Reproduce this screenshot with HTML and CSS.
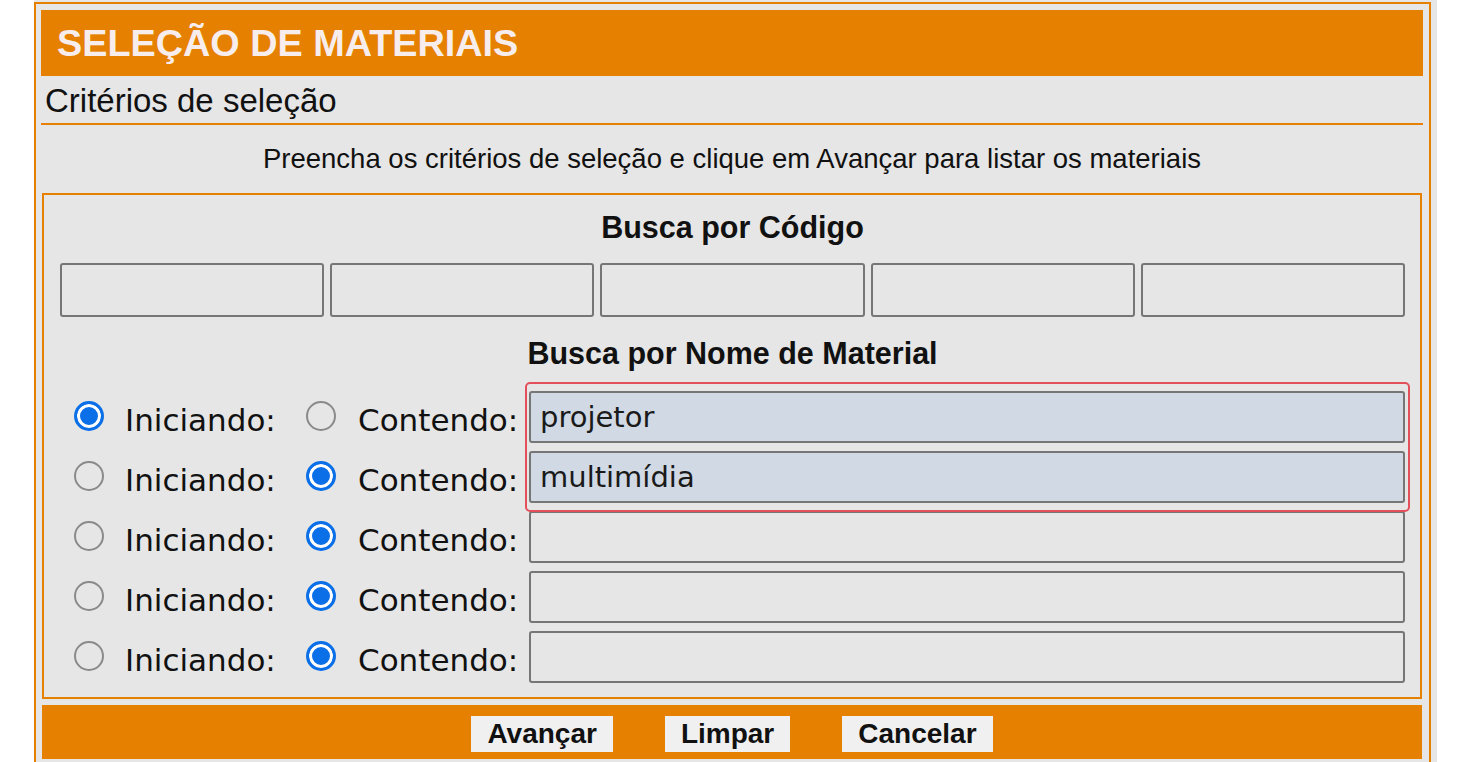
FILE: index.html
```html
<!DOCTYPE html>
<html lang="pt-BR">
<head>
<meta charset="utf-8">
<title>Seleção de Materiais</title>
<link rel="stylesheet" href="styles.css">
</head>
<body>
<div class="page">
  <div class="frame">
    <div class="title-bar">SELEÇÃO DE MATERIAIS</div>
    <div class="subtitle">Critérios de seleção</div>
    <div class="hint">Preencha os critérios de seleção e clique em Avançar para listar os materiais</div>
    <div class="criteria">
      <div class="section-title first">Busca por Código</div>
      <div class="codes">
        <input class="field" type="text">
        <input class="field" type="text">
        <input class="field" type="text">
        <input class="field" type="text">
        <input class="field" type="text">
      </div>
      <div class="section-title second">Busca por Nome de Material</div>
      <div class="names">
        <div class="row">
          <input class="radio" type="radio" name="m1" checked>
          <label class="lbl lbl-start">Iniciando:</label>
          <input class="radio" type="radio" name="m1">
          <label class="lbl lbl-contain">Contendo:</label>
          <input class="field name filled" type="text" value="projetor">
        </div>
        <div class="row">
          <input class="radio" type="radio" name="m2">
          <label class="lbl lbl-start">Iniciando:</label>
          <input class="radio" type="radio" name="m2" checked>
          <label class="lbl lbl-contain">Contendo:</label>
          <input class="field name filled" type="text" value="multimídia">
        </div>
        <div class="row">
          <input class="radio" type="radio" name="m3">
          <label class="lbl lbl-start">Iniciando:</label>
          <input class="radio" type="radio" name="m3" checked>
          <label class="lbl lbl-contain">Contendo:</label>
          <input class="field name" type="text">
        </div>
        <div class="row">
          <input class="radio" type="radio" name="m4">
          <label class="lbl lbl-start">Iniciando:</label>
          <input class="radio" type="radio" name="m4" checked>
          <label class="lbl lbl-contain">Contendo:</label>
          <input class="field name" type="text">
        </div>
        <div class="row">
          <input class="radio" type="radio" name="m5">
          <label class="lbl lbl-start">Iniciando:</label>
          <input class="radio" type="radio" name="m5" checked>
          <label class="lbl lbl-contain">Contendo:</label>
          <input class="field name" type="text">
        </div>
      </div>
      <div class="highlight"></div>
    </div>
    <div class="button-bar">
      <button class="btn" type="button">Avançar</button>
      <button class="btn" type="button">Limpar</button>
      <button class="btn" type="button">Cancelar</button>
    </div>
  </div>
</div>
</body>
</html>
```

FILE: styles.css
```css
* {
  box-sizing: border-box;
}

html, body {
  margin: 0;
  padding: 0;
  background: #ffffff;
  height: 762px;
  overflow: hidden;
}

body {
  font-family: "Liberation Sans", Arial, sans-serif;
  color: #111111;
}

.page {
  margin-left: 34px;
  width: 1403px;
  height: 762px;
  background: #e6e6e6;
  padding-top: 2px;
}

.frame {
  width: 1397px;
  height: 760px;
  border: 2px solid #e68000;
  border-bottom: none;
  padding: 6px 6px 0 5px;
}

.title-bar {
  height: 66px;
  background: #e68000;
  color: #f7eded;
  font-weight: bold;
  font-size: 37.8px;
  line-height: 66px;
  padding-left: 16px;
}

.subtitle {
  height: 49px;
  border-bottom: 2px solid #e68000;
  font-size: 33px;
  line-height: 50px;
  padding-left: 4px;
}

.hint {
  height: 68px;
  line-height: 68px;
  text-align: center;
  font-size: 27.5px;
}

.criteria {
  position: relative;
  margin: 0 1px;
  height: 506px;
  border: 2px solid #e68000;
  padding: 14px 15px 0 16px;
}

.section-title {
  text-align: center;
  font-weight: bold;
  font-size: 30.5px;
  line-height: 36px;
}

.section-title.first {
  margin-bottom: 18px;
}

.section-title.second {
  margin-top: 18px;
  margin-bottom: 16px;
}

.codes {
  display: flex;
  gap: 6px;
}

.field {
  height: 54px;
  border: 2px solid #767676;
  border-radius: 3px;
  background: #e6e6e6;
  font-family: "DejaVu Sans", sans-serif;
  font-size: 29px;
  color: #1a1a1a;
  padding: 0 9px;
  margin: 0;
  outline: none;
}

.codes .field {
  flex: 1;
  min-width: 0;
}

.names {
  margin-left: -16px;
}

.row {
  display: flex;
  align-items: center;
  height: 60px;
  padding-left: 30px;
}

.radio {
  appearance: none;
  -webkit-appearance: none;
  width: 30px;
  height: 30px;
  margin: 0 0 3px 0;
  border: 2px solid #8a8a8a;
  border-radius: 50%;
  background: #e6e6e6;
  flex: none;
}

.radio:checked {
  border: 3px solid #0b6fe8;
  background: #0b6fe8;
  box-shadow: inset 0 0 0 3px #ffffff;
}

.lbl {
  font-family: "DejaVu Sans", sans-serif;
  font-size: 31px;
  color: #111111;
  white-space: nowrap;
  padding-top: 6px;
}

.lbl-start {
  margin-left: 21px;
  width: 181px;
}

.lbl-contain {
  margin-left: 22px;
  width: 171px;
}

.field.name {
  flex: 1;
  min-width: 0;
  height: 52px;
}

.field.filled {
  background: #d1d9e4;
}

.highlight {
  position: absolute;
  left: 481px;
  top: 187px;
  width: 885px;
  height: 130px;
  border: 2.5px solid #e4505a;
  border-radius: 5px;
}

.button-bar {
  margin: 6px 1px 0 1px;
  height: 54px;
  background: #e68000;
  display: flex;
  justify-content: center;
  align-items: center;
  gap: 52px;
}

.btn {
  height: 36px;
  padding: 0 16px;
  border: none;
  background: #f0f0f0;
  font-family: "Liberation Sans", Arial, sans-serif;
  font-weight: bold;
  font-size: 28px;
  color: #111111;
  margin: 4px 0 0 0;
}
```
